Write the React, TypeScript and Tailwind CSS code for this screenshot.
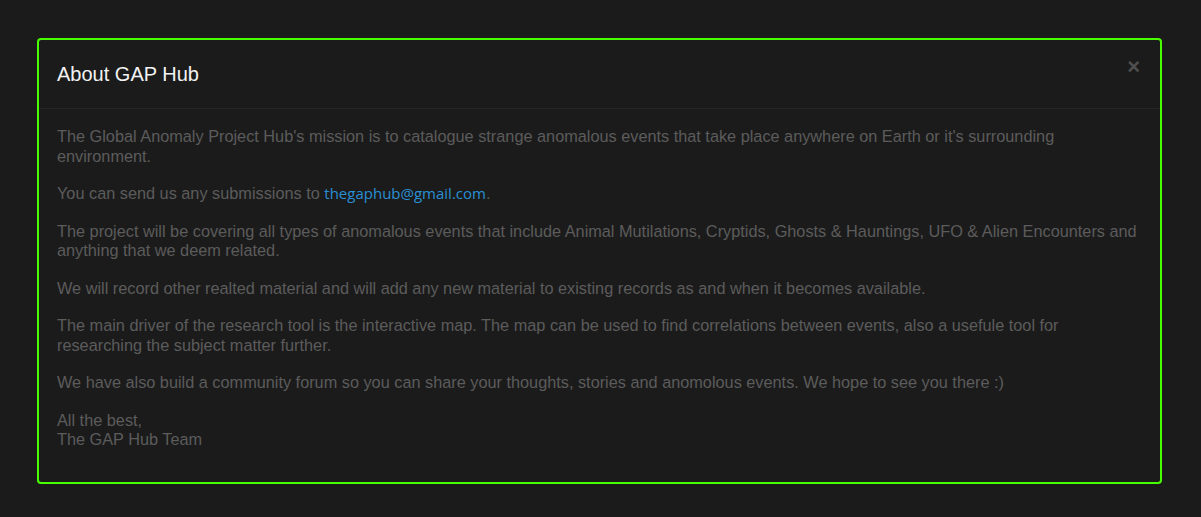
const paragraphs = [
  "The Global Anomaly Project Hub's mission is to catalogue strange anomalous events that take place anywhere on Earth or it's surrounding environment.",
  null,
  "The project will be covering all types of anomalous events that include Animal Mutilations, Cryptids, Ghosts & Hauntings, UFO & Alien Encounters and anything that we deem related.",
  "We will record other realted material and will add any new material to existing records as and when it becomes available.",
  "The main driver of the research tool is the interactive map. The map can be used to find correlations between events, also a usefule tool for researching the subject matter further.",
  "We have also build a community forum so you can share your thoughts, stories and anomolous events. We hope to see you there :)",
];

export default function App() {
  return (
    <div className="min-h-[517px] w-full bg-[#1b1b1b] pt-[38px] pl-[37px] font-['Liberation_Sans',Arial,sans-serif]">
      <div className="relative w-[1125px] rounded-[4px] border-2 border-[#48ff00] bg-[#1b1b1b]">
        <div className="flex h-[69px] items-center border-b border-[#262626] px-[18px]">
          <h4 className="text-[20px] leading-[22px] text-[#f2f2f2]">About GAP Hub</h4>
        </div>
        <button className="absolute right-[20px] top-[16px] text-[22px] font-bold leading-[22px] text-[#4f4f4f]">
          ×
        </button>
        <div className="px-[18px] pt-[18px] pb-[32px] text-[16.3px] leading-[19.5px] text-[#5c5c5c]">
          {paragraphs.map((p, i) =>
            p === null ? (
              <p key={i} className="mb-[18px]">
                You can send us any submissions to{" "}
                <a className="font-['Open_Sans',sans-serif] text-[15px] text-[#2a8fd4]">thegaphub@gmail.com</a>.
              </p>
            ) : (
              <p key={i} className="mb-[18px]">
                {p}
              </p>
            )
          )}
          <p>
            All the best,
            <br />
            The GAP Hub Team
          </p>
        </div>
      </div>
    </div>
  );
}
